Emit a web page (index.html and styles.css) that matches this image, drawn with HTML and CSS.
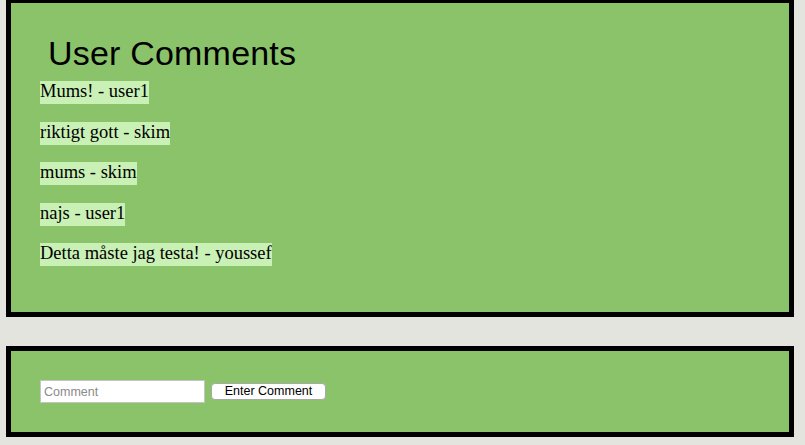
FILE: index.html
```html
<!DOCTYPE html>
<html lang="sv">
<head>
<meta charset="utf-8">
<title>User Comments</title>
<link rel="stylesheet" href="styles.css">
</head>
<body>
  <section class="panel comments">
    <h1 class="title">User Comments</h1>
    <ul class="list">
      <li class="item"><span class="bubble">Mums! - user1</span></li>
      <li class="item"><span class="bubble">riktigt gott - skim</span></li>
      <li class="item"><span class="bubble">mums - skim</span></li>
      <li class="item"><span class="bubble">najs - user1</span></li>
      <li class="item"><span class="bubble">Detta måste jag testa! - youssef</span></li>
    </ul>
  </section>
  <section class="panel form">
    <form class="row">
      <input class="field" type="text" placeholder="Comment">
      <button class="btn" type="button">Enter Comment</button>
    </form>
  </section>
</body>
</html>
```
FILE: styles.css
```css
html, body {
  margin: 0;
  padding: 0;
}
body {
  background: #e2e4dd;
  padding: 0 11px 0 6px;
  font-family: "Liberation Serif", "Times New Roman", serif;
}
.panel {
  border: 5px solid #000;
  background: #8bc36b;
}
.comments {
  margin-top: -2px;
  padding: 32px 29px 46px;
}
.title {
  margin: 0;
  padding-left: 8px;
  font-family: "Liberation Sans", Arial, sans-serif;
  font-weight: normal;
  font-size: 34px;
  line-height: 37px;
  letter-spacing: 0.2px;
  color: #000;
}
.list {
  list-style: none;
  margin: 9px 0 0;
  padding: 0;
  display: flex;
  flex-direction: column;
  gap: 17.5px;
}
.item {
  display: flex;
}
.bubble {
  display: block;
  background: #c9f0b5;
  color: #000;
  font-size: 18.5px;
  line-height: 21px;
  padding-bottom: 2px;
  white-space: nowrap;
}
.form {
  margin-top: 29px;
  padding: 29px;
}
.row {
  display: flex;
  align-items: center;
  gap: 6px;
  margin: 0;
}
.field {
  box-sizing: border-box;
  width: 165px;
  height: 23px;
  margin: 0;
  padding: 0 3px;
  border: 1px solid #c4c4c4;
  background: #fff;
  font-family: "Liberation Sans", Arial, sans-serif;
  font-size: 12.5px;
  color: #000;
  outline: none;
}
.field::placeholder {
  color: #8a8a8a;
}
.btn {
  box-sizing: border-box;
  width: 115px;
  height: 17px;
  margin: 0;
  padding: 0 0 1px;
  border: 1px solid #a8a8a8;
  border-radius: 4px;
  background: #fff;
  font-family: "Liberation Sans", Arial, sans-serif;
  font-size: 12.5px;
  line-height: 14px;
  color: #000;
}
```
